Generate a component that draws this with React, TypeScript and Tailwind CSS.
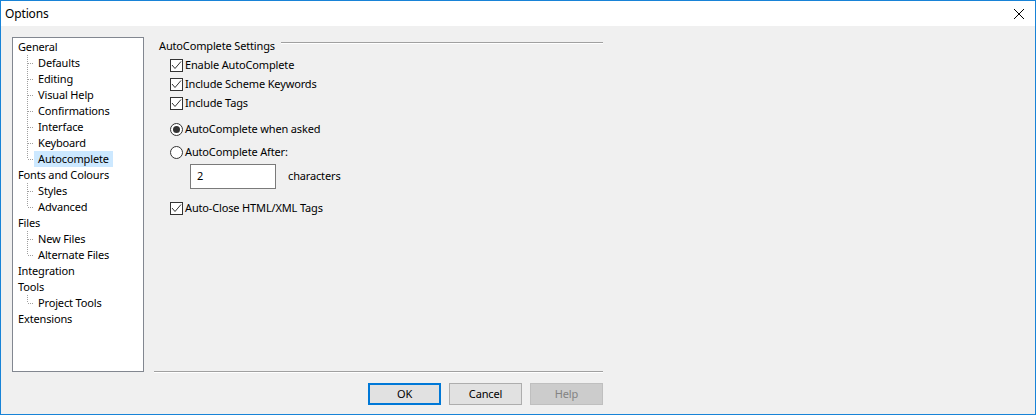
import React from "react";

const font = { fontFamily: '"Noto Sans", "Open Sans", sans-serif' };

type Node = { label: string; children?: string[] };

const tree: Node[] = [
  {
    label: "General",
    children: ["Defaults", "Editing", "Visual Help", "Confirmations", "Interface", "Keyboard", "Autocomplete"],
  },
  { label: "Fonts and Colours", children: ["Styles", "Advanced"] },
  { label: "Files", children: ["New Files", "Alternate Files"] },
  { label: "Integration" },
  { label: "Tools", children: ["Project Tools"] },
  { label: "Extensions" },
];

function Connector({ last }: { last: boolean }) {
  return (
    <svg width="16" height="16" className="shrink-0">
      <line x1="9.5" y1="0" x2="9.5" y2={last ? 8 : 16} stroke="#a0a0a0" strokeDasharray="1 1" />
      <line x1="10" y1="8.5" x2="16" y2="8.5" stroke="#a0a0a0" strokeDasharray="1 1" />
    </svg>
  );
}

function Tree() {
  return (
    <div className="w-[132px] h-[335px] shrink-0 border border-[#828790] bg-white pt-[1px] pl-[5px]">
      {tree.map((n) => (
        <div key={n.label}>
          <div className="h-[16px] flex items-center text-[#000]">{n.label}</div>
          {n.children?.map((c, i) => (
            <div key={c} className="h-[16px] flex items-center">
              <Connector last={i === n.children!.length - 1} />
              <span
                className={`h-[16px] flex items-center pl-[4px] pr-[4px] ${
                  c === "Autocomplete" ? "bg-[#cce8ff]" : ""
                }`}
              >
                {c}
              </span>
            </div>
          ))}
        </div>
      ))}
    </div>
  );
}

function CheckBox({ label, className = "" }: { label: string; className?: string }) {
  return (
    <div className={`h-[16px] flex items-center pl-[16px] ${className}`}>
      <span className="w-[13px] h-[13px] border border-[#333333] bg-white flex items-center justify-center">
        <svg width="11" height="11" viewBox="0 0 11 11">
          <path d="M1 5 L4 8.5 L10 1.5" fill="none" stroke="#333333" strokeWidth="1" />
        </svg>
      </span>
      <span className="ml-[2px]">{label}</span>
    </div>
  );
}

function Radio({ label, checked, className = "" }: { label: string; checked?: boolean; className?: string }) {
  return (
    <div className={`h-[16px] flex items-center pl-[16px] ${className}`}>
      <span className="w-[13px] h-[13px] rounded-full border border-[#333333] bg-white flex items-center justify-center">
        {checked && <span className="w-[7px] h-[7px] rounded-full bg-[#333333]" />}
      </span>
      <span className="ml-[2px]">{label}</span>
    </div>
  );
}

export default function App() {
  return (
    <div
      className="w-[1036px] h-[415px] border border-[#1883d7] bg-[#f0f0f0] flex flex-col text-[11px] tracking-[-0.15px] text-[#000] overflow-hidden"
      style={font}
    >
      <div className="h-[25px] bg-white flex items-center justify-between pl-[4px] pr-[10px] shrink-0 text-[12px]">
        <span>Options</span>
        <svg width="12" height="12" viewBox="0 0 12 12">
          <path d="M1 1 L11 11 M11 1 L1 11" stroke="#000" strokeWidth="1" />
        </svg>
      </div>
      <div className="flex pt-[11px] pl-[11px]">
        <Tree />
        <div className="ml-[10px] w-[449px] flex flex-col">
          <div className="h-[335px] flex flex-col border-b border-[#a0a0a0]">
            <div className="h-[16px] mt-[1px] flex items-center pl-[5px]">
              <span>AutoComplete Settings</span>
              <div className="flex-1 ml-[6px] mt-[-6px] border-t border-[#a0a0a0] border-b border-b-white" />
            </div>
            <CheckBox label="Enable AutoComplete" className="mt-[3px]" />
            <CheckBox label="Include Scheme Keywords" className="mt-[3px]" />
            <CheckBox label="Include Tags" className="mt-[3px]" />
            <Radio label="AutoComplete when asked" checked className="mt-[10px]" />
            <Radio label="AutoComplete After:" className="mt-[7px]" />
            <div className="mt-[4px] flex items-center pl-[36px]">
              <div className="w-[86px] h-[25px] border border-[#7a7a7a] bg-white flex items-center pl-[6px]">2</div>
              <span className="ml-[12px]">characters</span>
            </div>
            <CheckBox label="Auto-Close HTML/XML Tags" className="mt-[11px]" />
          </div>
          <div className="h-0 border-t border-white w-full" />
          <div className="mt-[10px] flex justify-end gap-[8px]">
            <div className="w-[73px] h-[22px] border-2 border-[#0078d7] bg-[#e1e1e1] flex items-center justify-center">
              OK
            </div>
            <div className="w-[73px] h-[22px] border border-[#adadad] bg-[#e1e1e1] flex items-center justify-center">
              Cancel
            </div>
            <div className="w-[73px] h-[22px] border border-[#bfbfbf] bg-[#cccccc] text-[#838383] flex items-center justify-center">
              Help
            </div>
          </div>
        </div>
      </div>
    </div>
  );
}
